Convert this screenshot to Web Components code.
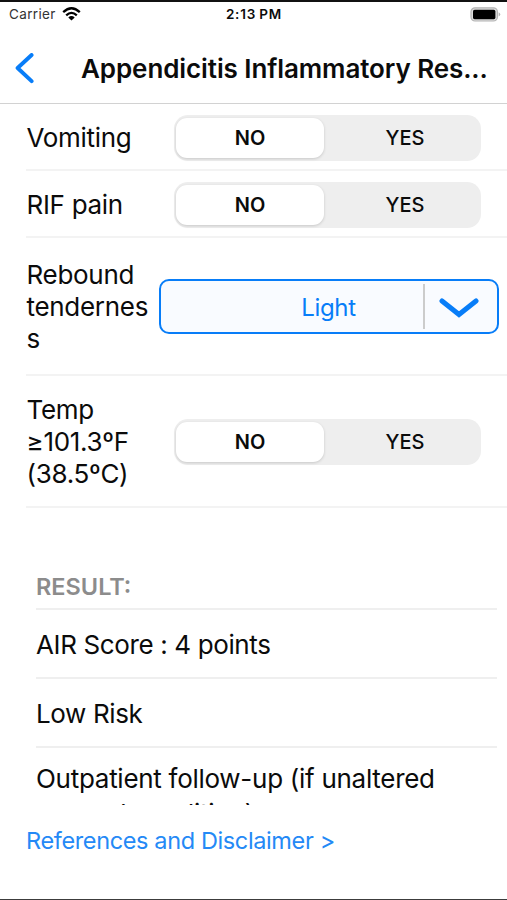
<!DOCTYPE html>
<html lang="en">
<head>
<meta charset="utf-8">
<meta name="viewport" content="width=device-width, initial-scale=1">
<title>Appendicitis Inflammatory Response</title>
<style>
:root {
    --tint: #087df8;
    --line: #efefef;
}
body {
    margin: 0;
    font-family: Inter, "Liberation Sans", sans-serif;
    color: #0b0b0b;
    background-color: #fff;
}
</style>
</head>
<body>
<app-screen>
    <status-bar slot="top" carrier="Carrier" time="2:13 PM"></status-bar>
    <title-bar slot="top">Appendicitis Inflammatory Res...</title-bar>
    <form-row style="--row-height: 67px">Vomiting<yes-no slot="control"></yes-no></form-row>
    <form-row style="--row-height: 67px">RIF pain<yes-no slot="control"></yes-no></form-row>
    <form-row style="--row-height: 138px">Rebound tenderness<drop-down slot="control">Light</drop-down></form-row>
    <form-row style="--row-height: 132px">Temp ≥101.3ºF (38.5ºC)<yes-no slot="control"></yes-no></form-row>
    <result-list>
        <span slot="heading">RESULT:</span>
        <result-item>AIR Score : 4 points</result-item>
        <result-item>Low Risk</result-item>
        <result-item multiline>Outpatient follow-up (if unaltered general condition)</result-item>
    </result-list>
    <link-row slot="bottom">References and Disclaimer &gt;</link-row>
</app-screen>

<script>
function attach(el, html) {
    const template = document.createElement('template');
    template.innerHTML = html;
    el.attachShadow({mode: 'open'}).appendChild(template.content.cloneNode(true));
}

class AppScreen extends HTMLElement {
    constructor() {
        super();
        attach(this,
`<style>
:host {
    display: flex;
    flex-direction: column;
    box-sizing: border-box;
    height: 900px;
    overflow: hidden;
    border-top: 2px solid #111;
    border-bottom: 1px solid #3c3c3c;
}
main {
    height: 701px;
    overflow: hidden;
    flex: none;
}
</style>
<slot name="top"></slot>
<main><slot></slot></main>
<slot name="bottom"></slot>`);
    }
}
customElements.define('app-screen', AppScreen);

class StatusBar extends HTMLElement {
    constructor() {
        super();
        attach(this,
`<style>
:host {
    display: grid;
    grid-template-columns: 1fr auto 1fr;
    align-items: center;
    height: 24px;
    padding: 0 6px 0 9px;
    font-size: 13.5px;
    flex: none;
}
.left {
    display: flex;
    align-items: center;
    gap: 6px;
    color: #333;
}
.carrier {
    letter-spacing: 0.35px;
}
.time {
    margin-right: 2px;
    font-weight: 600;
    font-size: 13.5px;
    letter-spacing: 0.8px;
    word-spacing: -1px;
}
.battery {
    justify-self: end;
}
svg {
    display: block;
}
</style>
<div class="left">
    <span class="carrier"></span>
    <svg width="19" height="14" viewBox="0 0 19 14" fill="none" stroke="#000" stroke-width="2.3"><path d="M1.2 5.2Q9.5-2.6 17.8 5.2M4.2 8.3Q9.5 3.4 14.8 8.3"/><path d="M9.5 13.6L6.3 10.4Q9.5 7.8 12.7 10.4Z" fill="#000" stroke="none"/></svg>
</div>
<span class="time"></span>
<svg class="battery" width="31" height="15" viewBox="0 0 31 15"><rect x="1" y=".8" width="26.4" height="13.2" rx="4" fill="#ddd" stroke="#b4b4b4" stroke-width="1.2"/><rect x="3" y="2.8" width="22.4" height="9.4" rx="1.6"/><path d="M28.6 5.2Q32 7.4 28.6 9.6Z" fill="#b4b4b4"/></svg>`);
    }

    connectedCallback() {
        this.shadowRoot.querySelector('.carrier').textContent = this.getAttribute('carrier');
        this.shadowRoot.querySelector('.time').textContent = this.getAttribute('time');
    }
}
customElements.define('status-bar', StatusBar);

class TitleBar extends HTMLElement {
    constructor() {
        super();
        attach(this,
`<style>
:host {
    display: flex;
    align-items: center;
    box-sizing: border-box;
    height: 78px;
    padding: 7px 0 0 15px;
    border-bottom: 1px solid #d2d2d2;
    flex: none;
}
svg {
    flex: none;
    margin-right: 46px;
}
.title {
    font-size: 26px;
    font-weight: 600;
    letter-spacing: -0.09px;
    white-space: nowrap;
}
</style>
<svg width="20" height="31" viewBox="0 0 20 31" fill="none" stroke="#087df8" stroke-width="3.9" stroke-linecap="round" stroke-linejoin="round"><path d="M16.6 2L2.6 15L16.6 28.2"/></svg>
<div class="title"><slot></slot></div>`);
    }
}
customElements.define('title-bar', TitleBar);

class FormRow extends HTMLElement {
    constructor() {
        super();
        attach(this,
`<style>
:host {
    display: flex;
    align-items: center;
    box-sizing: border-box;
    height: var(--row-height);
    margin-left: 26px;
    padding-top: 2px;
    border-bottom: 2px solid #f3f3f3;
}
.label {
    width: 123px;
    flex: none;
    box-sizing: border-box;
    padding-left: 0.5px;
    font-size: 26px;
    line-height: 32px;
    letter-spacing: -0.3px;
    overflow-wrap: anywhere;
}
</style>
<div class="label"><slot></slot></div>
<slot name="control"></slot>`);
    }
}
customElements.define('form-row', FormRow);

class YesNo extends HTMLElement {
    constructor() {
        super();
        attach(this,
`<style>
:host {
    display: grid;
    grid-template-columns: 148px 1fr;
    box-sizing: border-box;
    width: 307px;
    height: 46px;
    margin-left: 25px;
    padding: 3px 2px;
    border-radius: 14px;
    background-color: #eee;
    font-size: 20px;
    font-weight: 500;
    line-height: 40px;
    text-align: center;
}
.on {
    border-radius: 11px;
    background-color: #fff;
    box-shadow: 0 1px 3px rgba(0, 0, 0, .16);
    font-weight: 600;
}
.off {
    padding-left: 7px;
}
</style>
<div class="on">NO</div>
<div class="off">YES</div>`);
    }
}
customElements.define('yes-no', YesNo);

class DropDown extends HTMLElement {
    constructor() {
        super();
        attach(this,
`<style>
:host {
    display: flex;
    align-items: center;
    box-sizing: border-box;
    width: 340px;
    height: 55px;
    margin: 0 0 1px 10px;
    border: 2px solid var(--tint);
    border-radius: 10px;
    background-color: #f9fbff;
    color: var(--tint);
}
.value {
    flex: 1;
    padding: 3px 0 0 73px;
    font-size: 24px;
    letter-spacing: -0.35px;
    line-height: 30px;
    text-align: center;
}
.arrow {
    display: flex;
    align-items: center;
    justify-content: center;
    box-sizing: border-box;
    width: 74px;
    height: 45px;
    padding-right: 4px;
    border-left: 2px solid #ccc;
}
</style>
<div class="value"><slot></slot></div>
<div class="arrow"><svg width="40" height="22" viewBox="0 0 40 22" fill="none" stroke="#087df8" stroke-width="5" stroke-linecap="round"><path d="M3 5L20 18.5L37 5"/></svg></div>`);
    }
}
customElements.define('drop-down', DropDown);

class ResultList extends HTMLElement {
    constructor() {
        super();
        attach(this,
`<style>
:host {
    display: block;
    margin: 63px 10px 0 36px;
}
.heading {
    height: 31px;
    padding-bottom: 6px;
    border-bottom: 2px solid var(--line);
    font-size: 23.5px;
    font-weight: 600;
    line-height: 32px;
    color: #8c8c8c;
}
</style>
<div class="heading"><slot name="heading"></slot></div>
<slot></slot>`);
    }
}
customElements.define('result-list', ResultList);

class ResultItem extends HTMLElement {
    constructor() {
        super();
        attach(this,
`<style>
:host {
    display: block;
    box-sizing: border-box;
    padding: 19px 0 16px;
    border-bottom: 2px solid var(--line);
    font-size: 26px;
    line-height: 32px;
    letter-spacing: -0.37px;
}
/* wrapped text gets looser lines */
:host([multiline]) {
    padding-top: 13px;
    line-height: 35px;
    letter-spacing: -0.28px;
}
</style>
<slot></slot>`);
    }
}
customElements.define('result-item', ResultItem);

class LinkRow extends HTMLElement {
    constructor() {
        super();
        attach(this,
`<style>
:host {
    display: block;
    padding: 20px 26px 0;
    font-size: 23.5px;
    line-height: 32px;
    letter-spacing: -0.37px;
    color: #2489f6;
}
</style>
<slot></slot>`);
    }
}
customElements.define('link-row', LinkRow);
</script>
</body>
</html>
